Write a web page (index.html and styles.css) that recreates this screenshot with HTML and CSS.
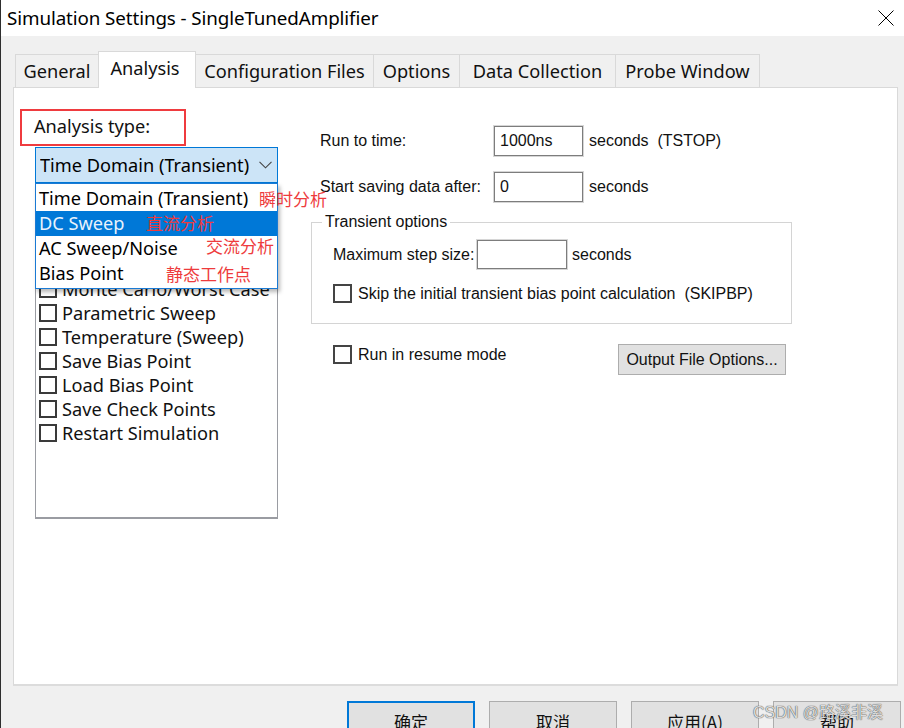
FILE: index.html
```html
<!DOCTYPE html>
<html lang="en">
<head>
<meta charset="utf-8">
<title>Simulation Settings - SingleTunedAmplifier</title>
<link rel="stylesheet" href="styles.css">
</head>
<body>
<div class="window">
  <header class="titlebar">
    <span class="title">Simulation Settings - SingleTunedAmplifier</span>
    <svg class="close" width="16" height="16" viewBox="0 0 16 16"><path d="M0.5 0.5L15.5 15.5M15.5 0.5L0.5 15.5" stroke="#000" stroke-width="1" fill="none"/></svg>
  </header>

  <nav class="tabs">
    <div class="tab t-general">General</div>
    <div class="tab active t-analysis">Analysis</div>
    <div class="tab t-config">Configuration Files</div>
    <div class="tab t-options">Options</div>
    <div class="tab t-data">Data Collection</div>
    <div class="tab t-probe">Probe Window</div>
  </nav>

  <section class="panel">
    <div class="left">
      <div class="type-label">Analysis type:</div>
      <div class="combo-wrap">
        <div class="combo">
          <span class="combo-text">Time Domain (Transient)</span>
          <svg class="chevron" width="13" height="8" viewBox="0 0 13 8"><path d="M0.5 0.8L6.5 6.8L12.5 0.8" stroke="#444" stroke-width="1.1" fill="none"/></svg>
        </div>
        <ul class="dropdown">
          <li class="dd-item">Time Domain (Transient)</li>
          <li class="dd-item selected">DC Sweep</li>
          <li class="dd-item">AC Sweep/Noise</li>
          <li class="dd-item">Bias Point</li>
        </ul>
      </div>
      <div class="options-label">Options:</div>
      <div class="listbox">
        <div class="row"><span class="cb"></span><span>General Settings</span></div>
        <div class="row"><span class="cb"></span><span>Monte Carlo/Worst Case</span></div>
        <div class="row"><span class="cb"></span><span>Parametric Sweep</span></div>
        <div class="row"><span class="cb"></span><span>Temperature (Sweep)</span></div>
        <div class="row"><span class="cb"></span><span>Save Bias Point</span></div>
        <div class="row"><span class="cb"></span><span>Load Bias Point</span></div>
        <div class="row"><span class="cb"></span><span>Save Check Points</span></div>
        <div class="row"><span class="cb"></span><span>Restart Simulation</span></div>
      </div>
    </div>

    <div class="right">
      <div class="field">
        <span class="field-label">Run to time:</span>
        <span class="input">1000ns</span>
        <span class="unit">seconds&nbsp; (TSTOP)</span>
      </div>
      <div class="field second">
        <span class="field-label">Start saving data after:</span>
        <span class="input">0</span>
        <span class="unit">seconds</span>
      </div>
      <fieldset class="group">
        <legend>Transient options</legend>
        <div class="field step">
          <span class="field-label step-label">Maximum step size:</span>
          <span class="input step-input"></span>
          <span class="unit step-unit">seconds</span>
        </div>
        <label class="check skip"><span class="cb small"></span><span>Skip the initial transient bias point calculation&nbsp; (SKIPBP)</span></label>
      </fieldset>
      <div class="resume-row">
        <label class="check"><span class="cb small"></span><span>Run in resume mode</span></label>
        <button class="btn output">Output File Options...</button>
      </div>
    </div>

    <span class="note n1">瞬时分析</span>
    <span class="note n2">直流分析</span>
    <span class="note n3">交流分析</span>
    <span class="note n4">静态工作点</span>
  </section>

  <footer class="buttons">
    <button class="dlg-btn default">确定</button>
    <button class="dlg-btn">取消</button>
    <button class="dlg-btn">应用(A)</button>
    <button class="dlg-btn">帮助</button>
  </footer>

  <div class="watermark">CSDN @路溪非溪</div>
</div>
</body>
</html>
```

FILE: styles.css
```css
* { box-sizing: border-box; }

body {
  margin: 0;
  background: #f0f0f0;
}

.window {
  position: relative;
  width: 904px;
  height: 728px;
  overflow: hidden;
  background: #f0f0f0;
  border-left: 1px solid #2e2e2e;
  font-family: "Noto Sans", "Noto Sans CJK SC", sans-serif;
  color: #000;
}

/* title bar */
.titlebar {
  height: 36px;
  background: #fff;
  display: flex;
  align-items: center;
  justify-content: space-between;
  padding: 0 10px 0 6px;
}
.title {
  font-size: 18.8px;
  letter-spacing: -0.1px;
}
.close { display: block; margin-top: -1px; }

/* tabs */
.tabs {
  display: flex;
  align-items: flex-end;
  height: 36px;
  margin-top: 15px;
  padding-left: 14px;
}
.tab {
  height: 33px;
  border: 1px solid #d9d9d9;
  border-bottom: none;
  margin-right: -1px;
  background: #f0f0f0;
  font-size: 18.2px;
  display: flex;
  align-items: center;
  justify-content: center;
  padding-bottom: 1px;
  color: #111;
  white-space: nowrap;
}
.tab.active {
  position: relative;
  z-index: 2;
  height: 37px;
  margin-bottom: -1px;
  background: #fff;
  padding-bottom: 5px;
  padding-right: 4px;
}
.t-general { width: 84px; }
.t-analysis { width: 98px; }
.t-config { width: 179px; }
.t-options { width: 87px; }
.t-data { width: 157px; }
.t-probe { width: 145px; }

/* panel */
.panel {
  position: relative;
  margin-left: 12px;
  width: 885px;
  height: 599px;
  background: #fff;
  border: 1px solid #d9d9d9;
  border-bottom: 2px solid #dcdcdc;
  display: flex;
}

.left {
  width: 297px;
  padding: 21px 0 0 6px;
  flex: none;
}
.type-label {
  width: 166px;
  height: 37px;
  border: 2px solid #ef3b3f;
  padding-left: 12px;
  padding-bottom: 4px;
  display: flex;
  align-items: center;
  font-size: 18.2px;
  color: #111;
}
.combo-wrap {
  position: relative;
  margin: 1px 0 0 15px;
  width: 243px;
}
.combo {
  height: 36px;
  background: #cce4f7;
  border: 1px solid #0078d7;
  display: flex;
  align-items: center;
  padding-left: 4px;
  font-size: 18.2px;
}
.combo-text {
  width: 209px;
  overflow: hidden;
  white-space: nowrap;
}
.chevron { margin-left: 10px; }

.dropdown {
  position: absolute;
  top: 100%;
  left: 0;
  width: 243px;
  margin: 0;
  padding: 2px 0 2px;
  list-style: none;
  background: #fff;
  border: 1px solid #1a7ad4;
  box-shadow: 2px 3px 4px rgba(0, 0, 0, 0.28);
  z-index: 3;
}
.dd-item {
  height: 25px;
  line-height: 25px;
  padding-left: 3px;
  font-size: 18.2px;
  white-space: nowrap;
}
.dd-item.selected {
  background: #0078d7;
  color: #e8f2fc;
}

.options-label {
  margin: 20px 0 24px 15px;
  height: 24px;
  font-size: 18.2px;
}
.listbox {
  margin-left: 15px;
  width: 243px;
  height: 268px;
  border: 1px solid #9a9ca2;
  border-bottom-width: 2px;
  padding-top: 1px;
  overflow: hidden;
}
.row {
  height: 24px;
  display: flex;
  align-items: center;
  padding-left: 3px;
  font-size: 18.2px;
  white-space: nowrap;
  color: #111;
}
.cb {
  flex: none;
  width: 18px;
  height: 18px;
  border: 2px solid #3a3a3a;
  background: #fff;
  margin-right: 5px;
}
.cb.small {
  width: 19px;
  height: 19px;
  border: 2px solid #444;
  margin-right: 6px;
}

/* right column */
.right {
  flex: 1;
  padding-top: 38px;
  font-family: "Liberation Sans", Arial, sans-serif;
  font-size: 16px;
  color: #111;
}
.field {
  display: flex;
  align-items: center;
  height: 30px;
}
.field.second { margin-top: 16px; }
.field-label {
  width: 183px;
  padding-left: 9px;
  white-space: nowrap;
}
.input {
  width: 89px;
  height: 30px;
  border: 1px solid #7d7d7d;
  box-shadow: 0 0 0 1px #d6d6d6;
  background: #fff;
  padding-left: 5px;
  display: flex;
  align-items: center;
}
.unit {
  margin-left: 6px;
  white-space: nowrap;
}

.group {
  margin: 11px 0 0;
  width: 481px;
  padding: 0 0 20px 21px;
  border: 1px solid #d4d4d4;
}
.group legend {
  padding: 0 3px;
  line-height: 18px;
  font-size: 16px;
  margin-left: -11px;
}
.field.step {
  margin-top: 9px;
  height: 29px;
}
.step-label {
  width: 144px;
  padding-left: 0;
}
.step-input {
  width: 90px;
  height: 29px;
}
.step-unit { margin-left: 5px; }

.check {
  display: flex;
  align-items: center;
  white-space: nowrap;
}
.check.skip { margin-top: 15px; }

.resume-row {
  width: 481px;
  margin-top: 20px;
  padding: 0 6px 0 22px;
  display: flex;
  align-items: flex-start;
  justify-content: space-between;
}
.resume-row .check { margin-top: 1px; }

.btn {
  font-family: "Liberation Sans", Arial, sans-serif;
  font-size: 16px;
  color: #111;
  background: #e1e1e1;
  border: 1px solid #adadad;
  padding: 0;
}
.output {
  width: 168px;
  height: 31px;
}

/* annotations */
.note {
  position: absolute;
  font-family: "Noto Sans CJK SC", sans-serif;
  font-size: 17px;
  line-height: 20px;
  color: #ee3b3d;
  z-index: 4;
  white-space: nowrap;
}
.n1 { left: 245px; top: 101px; }
.n2 { left: 132px; top: 125px; }
.n3 { left: 192px; top: 148px; }
.n4 { left: 152px; top: 176px; }

/* dialog buttons */
.buttons {
  display: flex;
  gap: 14px;
  margin-top: 15px;
  padding-left: 346px;
}
.dlg-btn {
  width: 128px;
  height: 40px;
  background: #e1e1e1;
  border: 1px solid #adadad;
  font-family: "Noto Sans CJK SC", sans-serif;
  font-size: 17px;
  color: #111;
  padding: 0;
}
.dlg-btn.default {
  border: 2px solid #0078d7;
}

.watermark {
  position: absolute;
  left: 752px;
  top: 699px;
  font-family: "Liberation Sans", "Noto Sans CJK SC", sans-serif;
  font-size: 16px;
  color: rgba(235, 235, 235, 0.92);
  text-shadow: 0 0 1px #444, 0 0 1px #666;
  white-space: nowrap;
}
```
